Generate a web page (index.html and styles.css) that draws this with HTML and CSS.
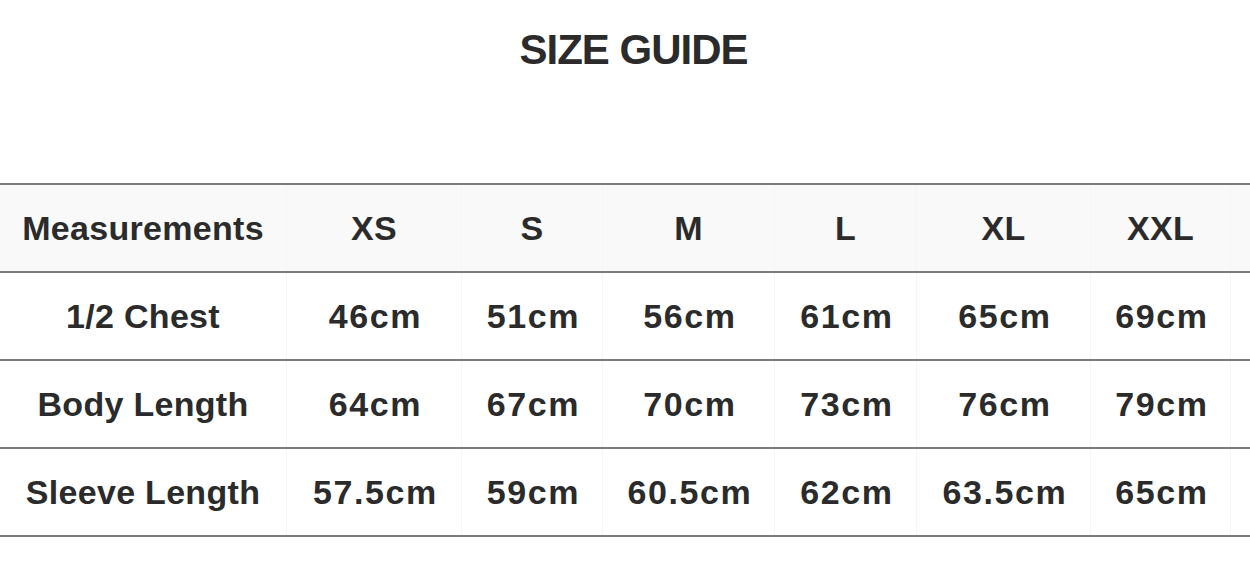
FILE: index.html
```html
<!DOCTYPE html>
<html lang="en">
<head>
<meta charset="utf-8">
<title>Size Guide</title>
<link rel="stylesheet" href="styles.css">
</head>
<body>
<div class="page">
  <h1 class="title">SIZE GUIDE</h1>
  <table class="sizes">
    <thead>
      <tr class="head">
        <th class="c0">Measurements</th>
        <th class="c1">XS</th>
        <th class="c2">S</th>
        <th class="c3">M</th>
        <th class="c4">L</th>
        <th class="c5">XL</th>
        <th class="c6">XXL</th>
        <th class="pad"></th>
      </tr>
    </thead>
    <tbody>
      <tr>
        <td>1/2 Chest</td><td>46cm</td><td>51cm</td><td>56cm</td><td>61cm</td><td>65cm</td><td>69cm</td><td class="pad"></td>
      </tr>
      <tr>
        <td>Body Length</td><td>64cm</td><td>67cm</td><td>70cm</td><td>73cm</td><td>76cm</td><td>79cm</td><td class="pad"></td>
      </tr>
      <tr>
        <td>Sleeve Length</td><td>57.5cm</td><td>59cm</td><td>60.5cm</td><td>62cm</td><td>63.5cm</td><td>65cm</td><td class="pad"></td>
      </tr>
    </tbody>
  </table>
</div>
</body>
</html>
```

FILE: styles.css
```css
html, body {
  margin: 0;
  padding: 0;
  background: #ffffff;
}

body {
  font-family: "Liberation Sans", Arial, sans-serif;
  color: #2b2b2b;
  overflow: hidden;
}

.page {
  width: 1250px;
}

.title {
  margin: 0;
  padding: 29px 0 0 17px;
  height: 183px;
  box-sizing: border-box;
  font-size: 42px;
  line-height: 1;
  font-weight: 700;
  letter-spacing: -1px;
  text-align: center;
  color: #2b2b2b;
}

.sizes {
  width: 1250px;
  border-collapse: collapse;
  table-layout: fixed;
}

.sizes th,
.sizes td {
  height: 86px;
  padding: 0;
  border-top: 2px solid #7b7b7b;
  border-bottom: 2px solid #7b7b7b;
  text-align: center;
  vertical-align: middle;
  font-size: 34px;
  font-weight: 700;
  letter-spacing: 0.3px;
  color: #2b2b2b;
  white-space: nowrap;
}

.sizes tbody td + td {
  letter-spacing: 1.6px;
  padding-left: 3px;
}

.sizes th + th,
.sizes td + td {
  border-left: 1px solid #f6f6f6;
}

.head th {
  background: #f9f9f9;
}

.c0 { width: 286px; }
.c1 { width: 174px; }
.c2 { width: 140px; }
.c3 { width: 171px; }
.c4 { width: 141px; }
.c5 { width: 173px; }
.c6 { width: 139px; }
.pad { width: auto; }
```
